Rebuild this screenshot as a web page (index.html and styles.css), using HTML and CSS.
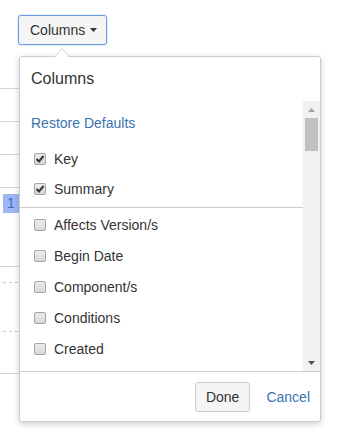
FILE: index.html
```html
<!DOCTYPE html>
<html lang="en">
<head>
    <meta charset="UTF-8">
    <meta name="viewport" content="width=device-width, initial-scale=1.0">
    <title>Columns</title>
    <link rel="stylesheet" href="styles.css">
</head>
<body>
    <div class="toolbar">
        <button class="columns-btn">Columns<svg class="caret" width="7" height="4" viewBox="0 0 7 4"><polygon points="0,0 7,0 3.5,4" fill="#333"/></svg></button>
    </div>

    <!-- issue table behind the picker -->
    <div class="issue-table">
        <div class="row"></div>
        <div class="row"></div>
        <div class="row"></div>
        <div class="row row-tall"><span class="issue-num">1</span></div>
        <div class="row row-dashed">
            <div class="dash"></div>
            <div class="dash dash-second"></div>
        </div>
        <div class="row"></div>
    </div>

    <div class="column-picker">
        <h3 class="picker-title">Columns</h3>
        <div class="picker-body">
            <div class="picker-scroll">
                <a class="restore-link">Restore Defaults</a>
                <ul class="col-list selected">
                    <li><span class="cb"><svg width="10" height="10" viewBox="0 0 10 10"><path d="M1.5 5 L4 7.5 L8.5 2" fill="none" stroke="#333" stroke-width="2"/></svg></span>Key</li>
                    <li><span class="cb"><svg width="10" height="10" viewBox="0 0 10 10"><path d="M1.5 5 L4 7.5 L8.5 2" fill="none" stroke="#333" stroke-width="2"/></svg></span>Summary</li>
                </ul>
                <ul class="col-list">
                    <li><span class="cb"></span>Affects Version/s</li>
                    <li><span class="cb"></span>Begin Date</li>
                    <li><span class="cb"></span>Component/s</li>
                    <li><span class="cb"></span>Conditions</li>
                    <li><span class="cb"></span>Created</li>
                </ul>
            </div>
            <div class="scrollbar">
                <div class="scroll-btn"><svg width="7" height="4" viewBox="0 0 7 4"><polygon points="0,4 7,4 3.5,0" fill="#a3a3a3"/></svg></div>
                <div class="scroll-thumb"></div>
                <div class="scroll-space"></div>
                <div class="scroll-btn"><svg width="7" height="4" viewBox="0 0 7 4"><polygon points="0,0 7,0 3.5,4" fill="#505050"/></svg></div>
            </div>
        </div>
        <div class="picker-footer">
            <button class="done-btn">Done</button>
            <a class="cancel-link">Cancel</a>
        </div>
    </div>
</body>
</html>
```

FILE: styles.css
```css
* { box-sizing: border-box; }
body {
    margin: 0;
    font-family: 'Liberation Sans', Arial, sans-serif;
    font-size: 14px;
    color: #333;
    background: white;
}
.toolbar { padding: 15px 0 0 18px; height: 45px; }
.columns-btn {
    font-family: 'Liberation Sans', Arial, sans-serif;
    font-size: 14px;
    color: #333;
    height: 30px;
    padding: 0 9px 0 11px;
    background: #f5f5f5;
    border: 1px solid #6c9be0;
    border-radius: 3px;
    box-shadow: 0 0 2px #9dbdf0;
    display: flex;
    align-items: center;
}
.caret { margin-left: 5px; }

.issue-table { width: 19px; margin-top: 43px; }
.row { height: 33px; border-top: 1px solid #d4d4d4; }
.row-tall { height: 79px; padding-top: 6px; }
.row-dashed { height: 107px; padding-top: 15px; }
.issue-num {
    display: block;
    width: 16px;
    height: 19px;
    margin-left: 3px;
    background: #9db6f6;
    color: #3b6cb5;
    line-height: 19px;
    text-align: center;
}
.dash {
    height: 1px;
    width: 15px;
    margin-left: 3px;
    background: repeating-linear-gradient(to right, #c8c8c8 0 3px, transparent 3px 6px);
}
.dash-second { margin-top: 48px; }

.column-picker {
    position: absolute;
    top: 56px;
    left: 19px;
    width: 302px;
    background: white;
    border: 1px solid #ccc;
    border-radius: 3px;
    box-shadow: 0 2px 6px rgba(0, 0, 0, 0.2);
}
.column-picker::before, .column-picker::after {
    content: "";
    position: absolute;
    border-style: solid;
    border-color: transparent;
    border-top-width: 0;
}
.column-picker::before { top: -9px; left: 34px; border-width: 0 8px 9px; border-bottom-color: #ccc; }
.column-picker::after { top: -8px; left: 35px; border-width: 0 7px 8px; border-bottom-color: white; }

.picker-title {
    margin: 0;
    padding: 11px 11px 12px;
    font-size: 16px;
    line-height: 21px;
    font-weight: normal;
    color: #333;
}
.picker-body { display: flex; height: 270px; }
.picker-scroll { flex: 1; overflow: hidden; padding-top: 12px; }
.restore-link {
    display: block;
    padding-left: 11px;
    line-height: 21px;
    margin-bottom: 10px;
    color: #3b73af;
}
.col-list { list-style: none; margin: 0; padding: 1px 0 0; }
.col-list li {
    display: flex;
    align-items: center;
    gap: 8px;
    height: 31px;
    padding-left: 14px;
}
.col-list.selected { padding: 0 0 3px; border-bottom: 1px solid #ccc; }
.col-list.selected li { height: 30px; }
.cb {
    width: 12px;
    height: 12px;
    border: 1px solid #a5a5a5;
    border-radius: 2px;
    background: linear-gradient(#ececec, #d8d8d8);
    display: flex;
}

.scrollbar {
    width: 17px;
    background: #f1f1f1;
    display: flex;
    flex-direction: column;
    align-items: center;
}
.scroll-btn { height: 17px; display: flex; align-items: center; justify-content: center; }
.scroll-thumb { width: 13px; height: 33px; background: #c1c1c1; }
.scroll-space { flex: 1; }

.picker-footer {
    border-top: 1px solid #ccc;
    padding: 10px 10px 9px;
    display: flex;
    justify-content: flex-end;
    align-items: center;
    gap: 16px;
}
.done-btn {
    font-family: 'Liberation Sans', Arial, sans-serif;
    font-size: 14px;
    color: #333;
    height: 30px;
    padding: 0 10px;
    background: #f5f5f5;
    border: 1px solid #ccc;
    border-radius: 3px;
}
.cancel-link { color: #3b73af; }
```
